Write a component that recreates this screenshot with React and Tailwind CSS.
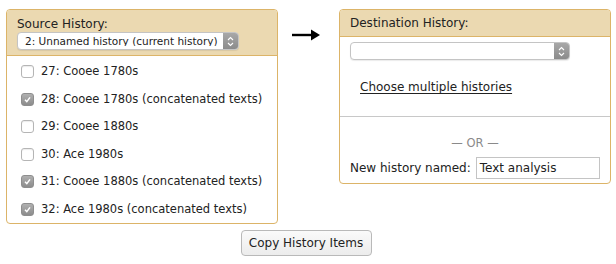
import React from "react";

const items = [
  { id: 27, name: "Cooee 1780s", checked: false },
  { id: 28, name: "Cooee 1780s (concatenated texts)", checked: true },
  { id: 29, name: "Cooee 1880s", checked: false },
  { id: 30, name: "Ace 1980s", checked: false },
  { id: 31, name: "Cooee 1880s (concatenated texts)", checked: true },
  { id: 32, name: "Ace 1980s (concatenated texts)", checked: true },
];

function Box({ checked }) {
  if (checked) {
    return (
      <span className="flex h-[13px] w-[13px] shrink-0 items-center justify-center rounded-[3px] border border-[#8e8e8e] bg-gradient-to-b from-[#b0b0b0] to-[#8c8c8c]">
        <svg width="9" height="9" viewBox="0 0 9 9">
          <path d="M2 4.8 L3.8 6.6 L7 2.4" fill="none" stroke="#fff" strokeWidth="1.5" />
        </svg>
      </span>
    );
  }
  return <span className="h-[13px] w-[13px] shrink-0 rounded-[3px] border border-[#b5b5b5] bg-white shadow-[inset_0_1px_1px_rgba(0,0,0,0.08)]" />;
}

function Select({ value, width }) {
  return (
    <div className={`flex h-[18px] items-center rounded-[4px] border border-[#c4c4c4] bg-white shadow-[0_1px_1px_rgba(0,0,0,0.08)] ${width}`}>
      <span className="flex-1 truncate pl-[7px] text-[10.5px] leading-none">{value}</span>
      <span className="flex h-full w-[15px] items-center justify-center rounded-r-[3px] bg-gradient-to-b from-[#a8a8a8] to-[#8b8b8b]">
        <svg width="7" height="11" viewBox="0 0 7 11">
          <path d="M1 4 L3.5 1.5 L6 4 M1 7 L3.5 9.5 L6 7" fill="none" stroke="#fff" strokeWidth="1.1" />
        </svg>
      </span>
    </div>
  );
}

export default function App() {
  return (
    <div className="h-[264px] w-[616px] bg-white pt-[9px] pl-[6px] text-[12px] text-[#222]" style={{ fontFamily: "'DejaVu Sans', sans-serif" }}>
      <div className="flex items-start">
        <div className="w-[272px] overflow-hidden rounded-[4px] border border-[#dcb468]">
          <div className="h-[46px] border-b border-[#dcb468] bg-[#ebd9b1] px-[10px] pt-[6px]">
            <div className="leading-[16px]">Source History:</div>
            <div>
              <Select value="2: Unnamed history (current history)" width="w-[222px]" />
            </div>
          </div>
          <div className="flex flex-col pt-[2px] text-[11.5px]">
            {items.map((it) => (
              <div key={it.id} className="flex h-[27.5px] items-center gap-[7px] pl-[14px]">
                <Box checked={it.checked} />
                <span className="whitespace-nowrap">
                  {it.id}: {it.name}
                </span>
              </div>
            ))}
          </div>
        </div>

        <div className="flex w-[61px] justify-center pt-[19px] pr-[4px]">
          <svg width="29" height="14" viewBox="0 0 29 14">
            <path d="M0 7 H23" stroke="#000" strokeWidth="2.4" />
            <path d="M19 1.5 L28 7 L19 12.5 Z" fill="#000" />
          </svg>
        </div>

        <div className="w-[272px] overflow-hidden rounded-[4px] border border-[#dcb468]">
          <div className="flex h-[27px] items-center border-b border-[#dcb468] bg-[#ebd9b1] px-[10px]">
            Destination History:
          </div>
          <div className="h-[79px] px-[10px] pt-[5px]">
            <Select value="" width="w-[220px]" />
            <div className="mt-[19px] pl-[10px] leading-[16px]">
              <a className="underline underline-offset-2">Choose multiple histories</a>
            </div>
          </div>
          <div className="h-[67px] border-t border-[#c8c8c8] px-[10px] pt-[19px]">
            <div className="text-center text-[11.5px] leading-[14px] text-[#8a8a8a]">— OR —</div>
            <div className="mt-[7px] flex items-center gap-[5px]">
              <span className="whitespace-nowrap">New history named:</span>
              <div className="flex h-[22px] w-[125px] items-center border border-[#c4c4c4] px-[3px]">Text analysis</div>
            </div>
          </div>
        </div>
      </div>

      <div className="mt-[6px] flex justify-center pr-[10px]">
        <button className="h-[26px] w-[131px] rounded-[4px] border border-[#b9b9b9] bg-gradient-to-b from-[#fafafa] to-[#ececec] text-[12px]">
          Copy History Items
        </button>
      </div>
    </div>
  );
}
